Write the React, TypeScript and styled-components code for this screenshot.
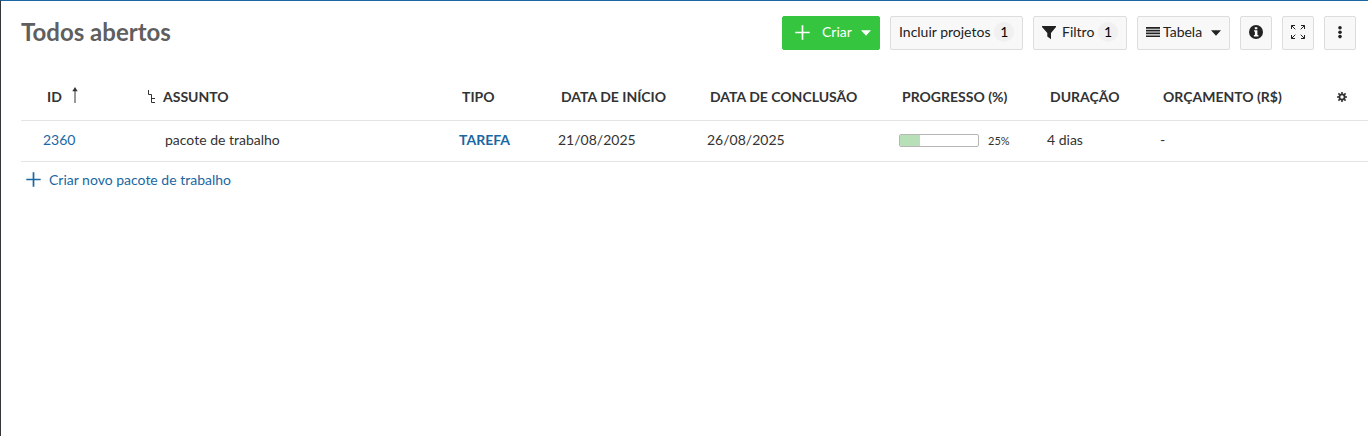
import React from "react";
import styled, { createGlobalStyle } from "styled-components";

const GlobalStyle = createGlobalStyle`
  *, *::before, *::after { box-sizing: border-box; }
  body {
    margin: 0;
    background: #fff;
    color: #333;
    font: 14px/20px Lato, "Liberation Sans", sans-serif;
  }
  button, a { font: inherit; }
  svg { display: block; flex: none; }
`;

const Page = styled.main`
  min-height: 100vh;
  padding: 15px 0 0 20px;
  border-top: 1px solid #1a67a3;
  border-left: 1px solid #333739;
`;

const Header = styled.header`
  display: flex;
  justify-content: space-between;
  padding-right: 12px;
`;

const Title = styled.h1`
  margin: 0;
  color: #5f5f5f;
  font-size: 24px;
  line-height: 31px;
  font-weight: 700;
`;

const Toolbar = styled.div`
  display: flex;
  gap: 10px;
`;

const ToolButton = styled.button<{ $width: number; $primary?: boolean }>`
  display: flex;
  align-items: center;
  justify-content: ${(p) => (p.$width > 32 ? "flex-start" : "center")};
  width: ${(p) => p.$width}px;
  height: 34px;
  padding: 0 ${(p) => (p.$width > 32 ? 8 : 0)}px;
  border: 1px solid ${(p) => (p.$primary ? "#35c53f" : "#dddddd")};
  border-radius: 2px;
  background: ${(p) => (p.$primary ? "#35c53f" : "#f8f8f8")};
  color: ${(p) => (p.$primary ? "#fff" : "#222")};
  white-space: nowrap;
  cursor: pointer;
`;

const Label = styled.span<{ $before?: number; $after?: number }>`
  margin-left: ${(p) => p.$before ?? 0}px;
  margin-right: ${(p) => p.$after ?? 0}px;
  padding-bottom: 2px;
`;

const Badge = styled.span`
  width: 20px;
  height: 20px;
  margin-bottom: 2px;
  border-radius: 50%;
  background: #f0f0f0;
  color: #000;
  line-height: 20px;
  text-align: center;
`;

const PlusSlot = styled.span`
  padding: 0 0 2px 4px;
`;

const Table = styled.table`
  width: 100%;
  margin-top: 24px;
  border-collapse: collapse;
  table-layout: fixed;
`;

const Col = styled.col<{ $width?: number }>`
  width: ${(p) => (p.$width ? `${p.$width}px` : "auto")};
`;

const Row = styled.tr`
  border-bottom: 1px solid #e4e4e4;
`;

const HeadCell = styled.th<{ $indent?: number }>`
  height: 46px;
  padding: 0 0 0 ${(p) => p.$indent ?? 8}px;
  font-weight: 700;
  text-align: left;
  text-transform: uppercase;
  white-space: nowrap;
`;

const Cell = styled.td<{ $indent?: number }>`
  height: 41px;
  padding: 0 0 2px ${(p) => p.$indent ?? 5}px;
  white-space: nowrap;
`;

const ProgressCell = styled(Cell)`
  padding-bottom: 0;
`;

const HeadContent = styled.span<{ $gap: number }>`
  display: flex;
  align-items: center;
  gap: ${(p) => p.$gap}px;
  height: 20px;
`;

const Link = styled.a`
  color: #1a67a3;
  text-decoration: none;
`;

const TypeName = styled.span`
  color: #1a67a3;
  font-weight: 700;
  text-transform: uppercase;
`;

const Progress = styled.div`
  display: flex;
  align-items: center;
  gap: 9px;
  font-size: 11px;
`;

const Track = styled.div`
  width: 80px;
  height: 13px;
  overflow: hidden;
  border: 1px solid #b5b5b5;
  border-radius: 2px;
`;

const Fill = styled.div`
  height: 100%;
  background: #b8e0b8;
`;

const IconButton = styled.button`
  display: block;
  padding: 0;
  border: 0;
  background: none;
  color: #333;
  cursor: pointer;
`;

const CreateLink = styled.a`
  display: inline-flex;
  align-items: center;
  gap: 8px;
  padding: 8px 5px;
  color: #1a67a3;
  text-decoration: none;
`;

const PlusIcon = () => (
  <svg width="15" height="15" viewBox="0 0 15 15" fill="none" stroke="currentColor" strokeWidth="1.7" aria-hidden>
    <path d="M7.5 .3v14.4M.3 7.5h14.4" />
  </svg>
);

const CaretIcon = () => (
  <svg width="10" height="6" viewBox="0 0 10 6" fill="currentColor" aria-hidden>
    <path d="M0 .3h10L5 5.8z" />
  </svg>
);

const FunnelIcon = () => (
  <svg width="14" height="16" viewBox="0 0 14 16" fill="currentColor" aria-hidden>
    <path d="M0 1h14v1L9 8v6.2L5.3 11.5V8L0 2z" />
  </svg>
);

const RowsIcon = () => (
  <svg width="14" height="12" viewBox="0 0 14 12" fill="#222" aria-hidden>
    <path d="M0 0h14v1.7H0zM0 2.8h14v1.7H0zM0 5.6h14v1.7H0zM0 8.4h14v1.7H0z" />
  </svg>
);

const InfoIcon = () => (
  <svg width="14" height="16" viewBox="0 0 14 16" aria-hidden>
    <circle cx="7" cy="7" r="7" fill="#222" />
    <path d="M5.8 2.3h2.5v2H5.8zM5 5.3h3.4v4.8h1v1.3H4.9v-1.3h1V6.6H5z" fill="#fff" />
  </svg>
);

const ExpandIcon = () => (
  <svg width="14" height="16" viewBox="0 0 14 16" fill="none" stroke="#222" aria-hidden>
    <path d="M.5 4V.5H4M10 .5h3.5V4M13.5 10v3.5H10M4 13.5H.5V10M.5 .5l3.8 3.8M13.5 .5L9.7 4.3M13.5 13.5L9.7 9.7M.5 13.5l3.8-3.8" />
  </svg>
);

const DotsIcon = () => (
  <svg width="4" height="14" viewBox="0 0 4 14" fill="#222" aria-hidden>
    <circle cx="2" cy="1.8" r="1.8" />
    <circle cx="2" cy="6.2" r="1.8" />
    <circle cx="2" cy="10.6" r="1.8" />
  </svg>
);

const SortIcon = () => (
  <svg width="6" height="22" viewBox="0 0 6 22" aria-hidden>
    <path d="M3 1l2.7 4.2H.3z" fill="#333" />
    <path d="M3 4v13" stroke="#333" />
  </svg>
);

const HierarchyIcon = () => (
  <svg width="8" height="13" viewBox="0 0 8 13" fill="none" stroke="#333" aria-hidden>
    <path d="M.5 0v4.5h3v8H7M3.5 8.5H7" />
  </svg>
);

const GearIcon = () => (
  <svg width="10" height="10" viewBox="0 0 10 10" fill="none" stroke="currentColor" aria-hidden>
    <circle cx="5" cy="5" r="2.6" strokeWidth="1.8" />
    <path d="M5 0v2M5 8v2M0 5h2M8 5h2M1.4 1.4l1.5 1.5M7.1 7.1l1.5 1.5M1.4 8.6l1.5-1.5M7.1 2.9l1.5-1.5" strokeWidth="1.6" />
  </svg>
);

const widths = [122, undefined, 99, 149, 192, 148, 113, 172, 41];

const workPackages = [
  {
    id: 2360,
    subject: "pacote de trabalho",
    type: "Tarefa",
    start: "21/08/2025",
    due: "26/08/2025",
    progress: 25,
    duration: "4 dias",
    budget: "-",
  },
];

export default function App() {
  return (
    <>
      <GlobalStyle />
      <Page>
        <Header>
          <Title>Todos abertos</Title>
          <Toolbar>
            <ToolButton $width={98} $primary>
              <PlusSlot><PlusIcon /></PlusSlot>
              <Label $before={12} $after={9}>Criar</Label>
              <CaretIcon />
            </ToolButton>
            <ToolButton $width={133}>
              <Label $after={4}>Incluir projetos</Label>
              <Badge>1</Badge>
            </ToolButton>
            <ToolButton $width={94}>
              <FunnelIcon />
              <Label $before={6} $after={4}>Filtro</Label>
              <Badge>1</Badge>
            </ToolButton>
            <ToolButton $width={93}>
              <RowsIcon />
              <Label $before={3} $after={9}>Tabela</Label>
              <CaretIcon />
            </ToolButton>
            <ToolButton $width={32} aria-label="Detalhes"><InfoIcon /></ToolButton>
            <ToolButton $width={32} aria-label="Tela cheia"><ExpandIcon /></ToolButton>
            <ToolButton $width={32} aria-label="Mais ações"><DotsIcon /></ToolButton>
          </Toolbar>
        </Header>
        <Table>
          <colgroup>
            {widths.map((width, i) => <Col key={i} $width={width} />)}
          </colgroup>
          <thead>
            <Row>
              <HeadCell $indent={26}><HeadContent $gap={10}>ID<SortIcon /></HeadContent></HeadCell>
              <HeadCell $indent={5}><HeadContent $gap={7}><HierarchyIcon />Assunto</HeadContent></HeadCell>
              <HeadCell>Tipo</HeadCell>
              <HeadCell>Data de início</HeadCell>
              <HeadCell>Data de conclusão</HeadCell>
              <HeadCell>Progresso (%)</HeadCell>
              <HeadCell>Duração</HeadCell>
              <HeadCell>Orçamento (R$)</HeadCell>
              <HeadCell $indent={10}>
                <IconButton aria-label="Configurar visualização"><GearIcon /></IconButton>
              </HeadCell>
            </Row>
          </thead>
          <tbody>
            {workPackages.map((item) => (
              <Row key={item.id}>
                <Cell $indent={22}><Link href="#">{item.id}</Link></Cell>
                <Cell $indent={22}>{item.subject}</Cell>
                <Cell><TypeName>{item.type}</TypeName></Cell>
                <Cell>{item.start}</Cell>
                <Cell>{item.due}</Cell>
                <ProgressCell>
                  <Progress>
                    <Track><Fill style={{ width: `${item.progress}%` }} /></Track>
                    {item.progress}%
                  </Progress>
                </ProgressCell>
                <Cell>{item.duration}</Cell>
                <Cell>{item.budget}</Cell>
                <Cell />
              </Row>
            ))}
          </tbody>
        </Table>
        <CreateLink href="#"><PlusIcon />Criar novo pacote de trabalho</CreateLink>
      </Page>
    </>
  );
}
